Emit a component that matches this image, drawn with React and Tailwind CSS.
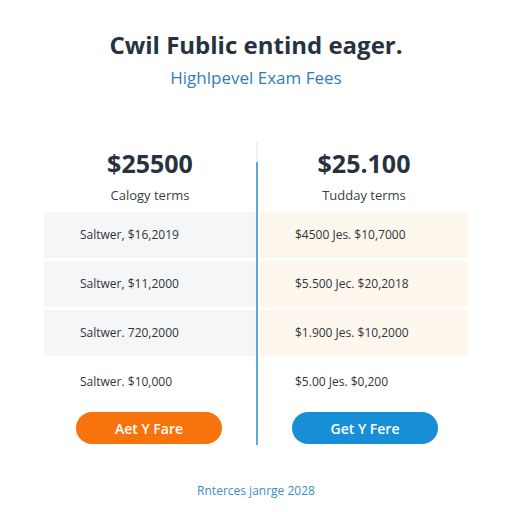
export default function App() {
    const left = ['Saltwer, $16,2019', 'Saltwer, $11,2000', 'Saltwer. 720,2000', 'Saltwer. $10,000'];
    const right = ['$4500 Jes. $10,7000', '$5.500 Jec. $20,2018', '$1.900 Jes. $10,2000', '$5.00 Jes. $0,200'];

    return (
        <div className="w-[512px] h-[512px] bg-white font-['Open_Sans','Liberation_Sans',sans-serif] overflow-hidden">
            {/* Header */}
            <div className="pt-[29px] text-center">
                <h1 className="text-[24px] leading-[32px] font-bold text-[#273140]">Cwil Fublic entind eager.</h1>
                <p className="mt-[5px] text-[17px] leading-[24px] text-[#2f7fb6]">Highlpevel Exam Fees</p>
            </div>

            {/* Pricing columns */}
            <div className="mt-[52px] mx-[44px] flex">
                <div className="w-[212px] flex flex-col">
                    <div className="pt-[5px] text-center text-[25px] leading-[32px] font-bold text-[#273140]">$25500</div>
                    <div className="mt-[6px] text-center text-[13px] leading-[20px] text-[#3a3f45]">Calogy terms</div>
                    <div className="mt-[7px] flex flex-col gap-[3px]">
                        {left.map((t, i) => (
                            <div key={i} className={`h-[46px] flex items-center pl-[36px] text-[12px] text-[#30353b] ${i < 3 ? 'bg-[#f5f6f7]' : ''}`}>
                                {t}
                            </div>
                        ))}
                    </div>
                    <div className="mt-[7px] pl-[32px]">
                        <button className="w-[146px] h-[32px] rounded-full bg-[#f8730c] text-white text-[14px] font-semibold">Aet Y Fare</button>
                    </div>
                </div>

                <div className="w-[2px] flex flex-col">
                    <div className="h-[20px] bg-[#eef0f2]" />
                    <div className="h-[283px] bg-[#5aa9d6]" />
                </div>

                <div className="w-[208px] ml-[2px] flex flex-col">
                    <div className="pt-[5px] text-center text-[25px] leading-[32px] font-bold text-[#273140]">$25.100</div>
                    <div className="mt-[6px] text-center text-[13px] leading-[20px] text-[#3a3f45]">Tudday terms</div>
                    <div className="mt-[7px] flex flex-col gap-[3px]">
                        {right.map((t, i) => (
                            <div key={i} className={`h-[46px] flex items-center pl-[35px] text-[12px] text-[#30353b] ${i < 3 ? 'bg-[#fdf7ee]' : ''}`}>
                                {t}
                            </div>
                        ))}
                    </div>
                    <div className="mt-[7px] pl-[32px]">
                        <button className="w-[146px] h-[32px] rounded-full bg-[#168fd7] text-white text-[14px] font-semibold">Get Y Fere</button>
                    </div>
                </div>
            </div>

            {/* Footer */}
            <p className="mt-[36px] text-center text-[12px] leading-[20px] text-[#3a8ccc]">Rnterces janrge 2028</p>
        </div>
    );
}
